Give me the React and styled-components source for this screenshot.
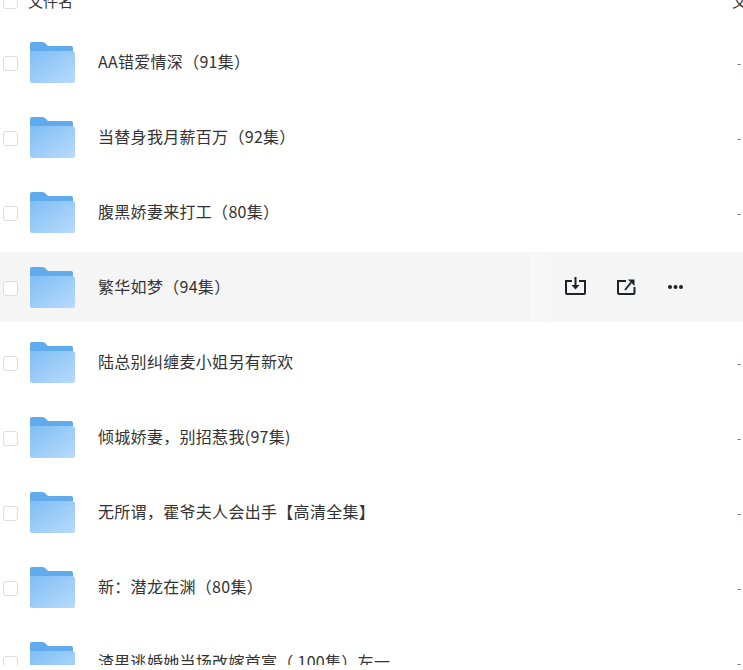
import React from 'react';
import styled, { createGlobalStyle } from 'styled-components';

const GlobalStyle = createGlobalStyle`
  html, body {
    margin: 0;
    padding: 0;
    background: #fff;
  }
  body {
    font-family: "Noto Sans CJK SC", sans-serif;
    color: #333;
  }
`;

const Viewport = styled.div`
  height: 665px;
  overflow: hidden;
  background: #fff;
`;

const Table = styled.div`
  margin-top: -16px;
`;

const HeaderRow = styled.div`
  display: flex;
  align-items: center;
  height: 32px;
  margin-bottom: 11px;
  font-size: 15px;
  color: #333;
`;

const HeaderName = styled.span`
  flex: 1;
  margin-left: 10px;
`;

const HeaderExtra = styled.span`
  width: 11px;
  overflow: hidden;
  white-space: nowrap;
`;

const Row = styled.div`
  position: relative;
  display: flex;
  align-items: center;
  height: 70px;
  margin-bottom: 5px;
  background: ${({ $hover }) => ($hover ? '#f5f5f5' : '#fff')};
`;

const Check = styled.span`
  flex: none;
  box-sizing: border-box;
  width: 15px;
  height: 15px;
  margin: 2px 0 0 3px;
  border: 1px solid #dcdcdc;
  border-radius: 3px;
  background: #fff;
`;

const FolderIcon = styled.svg`
  flex: none;
  width: 45px;
  height: 41px;
  margin: 1px 1px 0 12px;
`;

const Name = styled.span`
  flex: 1;
  margin: -2px 0 0 22px;
  font-size: 16px;
  line-height: 24px;
  letter-spacing: 0.3px;
  color: #333;
  white-space: nowrap;
`;

const Size = styled.span`
  flex: none;
  width: 6px;
  font-size: 12px;
  color: #666;
`;

const Actions = styled.div`
  position: absolute;
  top: 0;
  right: 0;
  bottom: 0;
  display: flex;
  align-items: center;
  gap: 29px;
  padding: 0 54px 0 35px;
  background: linear-gradient(to right, #f8f8f8, #f5f5f5 30px);
`;

const ActionIcon = styled.svg`
  display: block;
  width: 22px;
  height: 20px;
  color: #1f2329;
`;

const Folder = () => (
  <FolderIcon viewBox="0 0 45 41">
    <defs>
      <linearGradient id="folderBody" x1="0.1" y1="0" x2="1" y2="1">
        <stop offset="0" stopColor="#82bff5" />
        <stop offset="1" stopColor="#b8dbfb" />
      </linearGradient>
    </defs>
    <path d="M0 2a2 2 0 0 1 2-2h10c2 0 3 .8 4 2l2 2h23a2 2 0 0 1 2 2v4H0z" fill="#5fabec" />
    <path d="M0 9h43l2 2v28a2 2 0 0 1-2 2H2a2 2 0 0 1-2-2z" fill="url(#folderBody)" />
    <rect x="35" y="15" width="6" height="3" fill="#a3cff6" />
  </FolderIcon>
);

const DownloadIcon = () => (
  <ActionIcon viewBox="0 0 22 20" fill="none" stroke="currentColor" strokeWidth="2">
    <path d="M7 4H1v12a1 1 0 0 0 1 1h17a1 1 0 0 0 1-1V4h-6" />
    <path d="M10.5 0v8" />
    <path d="M6.5 8h8l-4 4.5z" fill="currentColor" stroke="none" />
  </ActionIcon>
);

const ShareIcon = () => (
  <ActionIcon viewBox="0 0 22 20" fill="none" stroke="currentColor" strokeWidth="2">
    <path d="M10 4H2v12a1 1 0 0 0 1 1h14.500a1 1 0 0 0 1-1v-6" />
    <path d="M9 13l6-7.500" />
    <path d="M12 2.500h6.500V9z" fill="currentColor" stroke="none" />
  </ActionIcon>
);

const MoreIcon = () => (
  <ActionIcon viewBox="0 0 22 20" fill="currentColor">
    <circle cx="3" cy="10" r="2" />
    <circle cx="8.500" cy="10" r="2" />
    <circle cx="14" cy="10" r="2" />
  </ActionIcon>
);

const files = [
  'AA错爱情深（91集）',
  '当替身我月薪百万（92集）',
  '腹黑娇妻来打工（80集）',
  '繁华如梦（94集）',
  '陆总别纠缠麦小姐另有新欢',
  '倾城娇妻，别招惹我(97集)',
  '无所谓，霍爷夫人会出手【高清全集】',
  '新：潜龙在渊（80集）',
  '渣男逃婚她当场改嫁首富（\u00a0100集）左一',
];

const App = () => (
  <>
    <GlobalStyle />
    <Viewport>
      <Table>
        <HeaderRow>
          <Check />
          <HeaderName>文件名</HeaderName>
          <HeaderExtra>文件大小</HeaderExtra>
        </HeaderRow>
        {files.map((name, i) => (
          <Row key={name} $hover={i === 3}>
            <Check />
            <Folder />
            <Name>{name}</Name>
            <Size>-</Size>
            {i === 3 && (
              <Actions>
                <DownloadIcon />
                <ShareIcon />
                <MoreIcon />
              </Actions>
            )}
          </Row>
        ))}
      </Table>
    </Viewport>
  </>
);

export default App;
